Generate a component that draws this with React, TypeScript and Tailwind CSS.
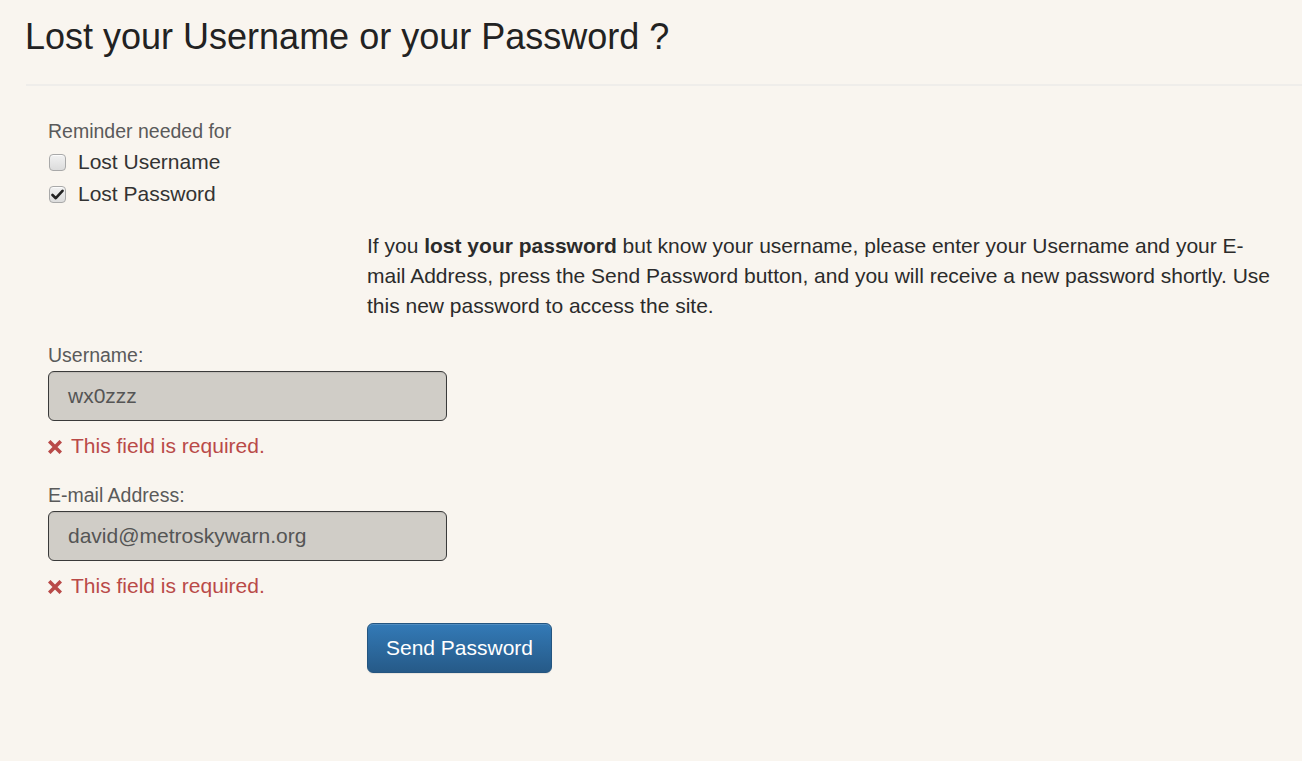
import React from "react";

function Checkbox({ checked }: { checked?: boolean }) {
  return (
    <span className="relative inline-flex h-[17px] w-[17px] shrink-0 items-center justify-center rounded-[4px] border border-[#a9a9a9] bg-gradient-to-b from-[#f2f2f2] to-[#dcdcdc] shadow-[inset_0_1px_0_rgba(255,255,255,0.8)]">
      {checked && (
        <svg width="13" height="11" viewBox="0 0 13 11" className="block">
          <path d="M1.5 6 L4.8 9.2 L11.5 1.8" fill="none" stroke="#222" strokeWidth="2.6" strokeLinecap="round" strokeLinejoin="round" />
        </svg>
      )}
    </span>
  );
}

function ErrorLine() {
  return (
    <div className="flex h-[28px] items-center gap-[9px] text-[21px] leading-[28px] text-[#b94a48]">
      <svg width="14" height="14" viewBox="0 0 14 14" className="mt-[1px] block shrink-0">
        <path d="M2.5 2.5 L11.5 11.5 M11.5 2.5 L2.5 11.5" stroke="#b94a48" strokeWidth="3.6" strokeLinecap="square" />
      </svg>
      <span>This field is required.</span>
    </div>
  );
}

function Field({ label, value }: { label: string; value: string }) {
  return (
    <div className="flex flex-col">
      <div className="h-[28px] text-[19.5px] leading-[28px] text-[#5a5a5a]">{label}</div>
      <div className="mt-[2px] flex h-[50px] w-[399px] items-center rounded-[6px] border border-[#3a3a3a] bg-[#d0cdc7] pl-[19px] text-[21px] text-[#555] shadow-[inset_0_1px_1px_rgba(0,0,0,0.08)]">
        {value}
      </div>
      <div className="mt-[11px]">
        <ErrorLine />
      </div>
    </div>
  );
}

export default function App() {
  return (
    <div className="min-h-screen w-full bg-[#f9f5ef] font-['Liberation_Sans',Arial,sans-serif] text-[#333]">
      <div className="pt-[17px] pl-[25px]">
        <h1 className="h-[40px] text-[36px] leading-[40px] text-[#222]">
          Lost your Username or your Password ?
        </h1>
      </div>
      <div className="mt-[27px] ml-[26px] h-[2px] bg-[#efedea]" />
      <div className="pl-[48px] pt-[31px]">
        <div className="h-[29px] text-[19.5px] leading-[28px] text-[#5a5a5a]">Reminder needed for</div>
        <div className="flex h-[32px] items-center gap-[12px] pl-[1px] text-[21px]">
          <Checkbox />
          <span>Lost Username</span>
        </div>
        <div className="flex h-[32px] items-center gap-[12px] pl-[1px] text-[21px]">
          <Checkbox checked />
          <span>Lost Password</span>
        </div>
        <p className="mt-[21px] ml-[319px] w-[915px] text-[21px] leading-[30px] text-[#2b2b2b]">
          If you <b className="font-bold">lost your password</b> but know your username, please enter your Username and your E-mail Address, press the Send Password button, and you will receive a new password shortly. Use this new password to access the site.
        </p>
        <div className="mt-[20px]">
          <Field label="Username:" value="wx0zzz" />
        </div>
        <div className="mt-[21px]">
          <Field label="E-mail Address:" value="david@metroskywarn.org" />
        </div>
        <div className="mt-[23px] ml-[319px]">
          <button className="h-[50px] w-[185px] rounded-[6px] border border-[#245580] bg-gradient-to-b from-[#337ab7] to-[#265a88] text-[21px] text-white shadow-[inset_0_1px_0_rgba(255,255,255,0.15),0_1px_1px_rgba(0,0,0,0.075)]">
            Send Password
          </button>
        </div>
      </div>
    </div>
  );
}
